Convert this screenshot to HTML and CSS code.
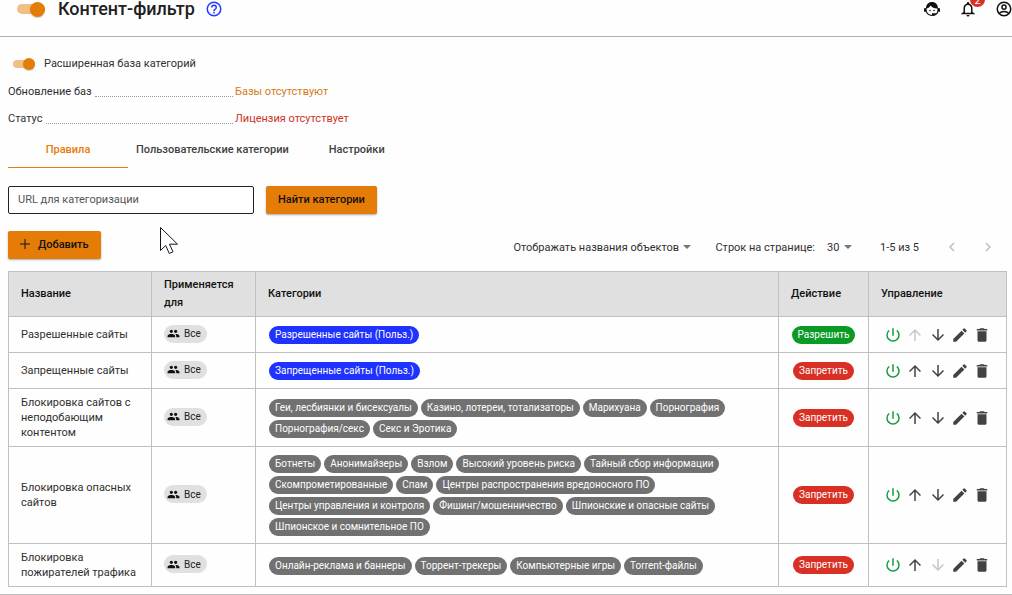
FILE: index.html
```html
<!DOCTYPE html>
<html lang="ru">
<head>
<meta charset="utf-8">
<title>Контент-фильтр</title>
<link rel="stylesheet" href="styles.css">
</head>
<body>
<svg class="sprite" aria-hidden="true">
  <symbol id="power" viewBox="0 0 24 24"><path d="M13 3h-2v10h2V3zm4.83 2.17l-1.42 1.42A6.92 6.92 0 0 1 19 12a7 7 0 1 1-11.42-5.42L6.17 5.17A8.93 8.93 0 0 0 3 12a9 9 0 0 0 18 0c0-2.74-1.23-5.18-3.17-6.83z"/></symbol>
  <symbol id="up" viewBox="0 0 24 24"><path d="M4 12l1.41 1.41L11 7.83V20h2V7.83l5.58 5.59L20 12l-8-8-8 8z"/></symbol>
  <symbol id="down" viewBox="0 0 24 24"><path d="M20 12l-1.41-1.41L13 16.17V4h-2v12.17l-5.58-5.59L4 12l8 8 8-8z"/></symbol>
  <symbol id="edit" viewBox="0 0 24 24"><path d="M3 17.25V21h3.75L17.81 9.94l-3.75-3.75L3 17.25zM20.71 7.04a1 1 0 0 0 0-1.41l-2.34-2.34a1 1 0 0 0-1.41 0l-1.83 1.83 3.75 3.75 1.83-1.83z"/></symbol>
  <symbol id="trash" viewBox="0 0 24 24"><path d="M6 19c0 1.100.9 2 2 2h8c1.100 0 2-.9 2-2V7H6v12zM19 4h-3.500l-1-1h-5l-1 1H5v2h14V4z"/></symbol>
  <symbol id="group" viewBox="0 0 24 24"><path d="M16 11c1.660 0 2.990-1.340 2.990-3S17.660 5 16 5s-3 1.340-3 3 1.340 3 3 3zm-8 0c1.660 0 2.990-1.340 2.990-3S9.660 5 8 5 5 6.340 5 8s1.340 3 3 3zm0 2c-2.330 0-7 1.170-7 3.500V19h14v-2.500c0-2.330-4.670-3.500-7-3.500zm8 0c-.29 0-.62.02-.97.05 1.160.84 1.970 1.970 1.970 3.450V19h6v-2.500c0-2.330-4.670-3.500-7-3.500z"/></symbol>
  <symbol id="caret" viewBox="0 0 8 4"><path d="M0 0h8L4 4z"/></symbol>
</svg>

<header class="header">
  <input class="switch switch-large" type="checkbox" role="switch" aria-label="Контент-фильтр" checked>
  <h1 class="title">Контент-фильтр</h1>
  <button class="icon-button help" type="button" aria-label="Справка">
    <svg class="icon" viewBox="0 0 24 24"><path d="M11 18h2v-2h-2v2zm1-16a10 10 0 1 0 0 20 10 10 0 0 0 0-20zm0 18a8 8 0 1 1 0-16 8 8 0 0 1 0 16zm0-14a4 4 0 0 0-4 4h2a2 2 0 1 1 4 0c0 2-3 1.750-3 5h2c0-2.250 3-2.500 3-5a4 4 0 0 0-4-4z"/></svg>
  </button>
  <nav class="header-actions">
    <button class="icon-button" type="button" aria-label="Поддержка">
      <svg class="icon" viewBox="0 0 18 18"><path d="M3 8.500C3 4.500 5.500 2 9 2s6 2.500 6 6.500c-3.500.2-6-.8-7.500-3C6.600 7.300 5 8.400 3 8.500z"/><path d="M3 8v2a6 5.500 0 0 0 6 5.500c3.300 0 6-2 6-5.500V8" fill="none" stroke="currentColor" stroke-width="1.200"/><rect x="1" y="8" width="2" height="4" rx="1"/><rect x="15" y="8" width="2" height="4" rx="1"/><circle cx="7" cy="10.500" r=".8"/><circle cx="11" cy="10.500" r=".8"/><path d="M9 13.200h5l-1.500 1.900H9z"/></svg>
    </button>
    <button class="icon-button bell" type="button" aria-label="Уведомления">
      <svg class="icon" viewBox="0 0 24 24"><path d="M12 22a2 2 0 0 0 2-2h-4a2 2 0 0 0 2 2zm6-6v-5c0-3.070-1.630-5.640-4.500-6.320V4a1.500 1.500 0 0 0-3 0v.68C7.640 5.360 6 7.920 6 11v5l-3 2v1h18v-1l-3-2zm-2 1H8v-6c0-2.480 1.510-4.500 4-4.500s4 2.020 4 4.500v6z"/></svg>
      <span class="badge">2</span>
    </button>
    <button class="icon-button" type="button" aria-label="Профиль">
      <svg class="icon" viewBox="0 0 24 24"><g fill="none" stroke="currentColor" stroke-width="2"><circle cx="12" cy="12" r="9"/><circle cx="12" cy="9.500" r="2.700"/><path d="M5.500 18c1.700-1.900 4-2.800 6.500-2.800s4.800.9 6.500 2.800"/></g></svg>
    </button>
  </nav>
</header>

<main class="main">
  <label class="base-switch"><input class="switch" type="checkbox" role="switch" checked>Расширенная база категорий</label>
  <dl class="facts">
    <div class="fact"><dt class="fact-name">Обновление баз</dt><dd class="fact-value warning">Базы отсутствуют</dd></div>
    <div class="fact"><dt class="fact-name">Статус</dt><dd class="fact-value error">Лицензия отсутствует</dd></div>
  </dl>

  <nav class="tabs">
    <a class="tab tab-active" href="#rules">Правила</a>
    <a class="tab" href="#categories">Пользовательские категории</a>
    <a class="tab" href="#settings">Настройки</a>
  </nav>

  <form class="search">
    <input class="url" type="text" placeholder="URL для категоризации" aria-label="URL для категоризации">
    <button class="button" type="button">Найти категории</button>
  </form>

  <div class="toolbar">
    <button class="button button-add" type="button"><svg class="plus" viewBox="0 0 10 10"><path d="M5 0v10M0 5h10"/></svg>Добавить</button>
    <div class="pager">
      <span class="picker"><select class="select" aria-label="Отображение"><option>Отображать названия объектов</option></select><svg class="caret"><use href="#caret"/></svg></span>
      <label class="per-page">Строк на странице:
        <span class="picker"><select class="select"><option>30</option></select><svg class="caret"><use href="#caret"/></svg></span>
      </label>
      <span class="range">1-5 из 5</span>
      <span class="pages">
        <button class="icon-button page" type="button" aria-label="Назад" disabled><svg class="chevron" viewBox="0 0 6 10"><path d="M5 1L1 5l4 4"/></svg></button>
        <button class="icon-button page" type="button" aria-label="Вперёд" disabled><svg class="chevron" viewBox="0 0 6 10"><path d="M1 1l4 4-4 4"/></svg></button>
      </span>
    </div>
  </div>

  <table class="rules">
    <colgroup><col class="col-name"><col class="col-target"><col><col class="col-action"><col class="col-manage"></colgroup>
    <thead>
      <tr><th>Название</th><th>Применяется для</th><th>Категории</th><th>Действие</th><th>Управление</th></tr>
    </thead>
    <tbody>
      <tr>
        <td>Разрешенные сайты</td>
        <td><span class="target"><svg class="people"><use href="#group"/></svg>Все</span></td>
        <td><div class="chips"><span class="chip custom">Разрешенные сайты (Польз.)</span></div></td>
        <td class="action"><span class="chip allow">Разрешить</span></td>
        <td><div class="manage"><button class="icon-button power" type="button" aria-label="Выключить"><svg class="icon"><use href="#power"/></svg></button><button class="icon-button" type="button" aria-label="Выше" disabled><svg class="icon"><use href="#up"/></svg></button><button class="icon-button" type="button" aria-label="Ниже"><svg class="icon"><use href="#down"/></svg></button><button class="icon-button" type="button" aria-label="Изменить"><svg class="icon"><use href="#edit"/></svg></button><button class="icon-button" type="button" aria-label="Удалить"><svg class="icon"><use href="#trash"/></svg></button></div></td>
      </tr>
      <tr>
        <td>Запрещенные сайты</td>
        <td><span class="target"><svg class="people"><use href="#group"/></svg>Все</span></td>
        <td><div class="chips"><span class="chip custom">Запрещенные сайты (Польз.)</span></div></td>
        <td class="action"><span class="chip deny">Запретить</span></td>
        <td><div class="manage"><button class="icon-button power" type="button" aria-label="Выключить"><svg class="icon"><use href="#power"/></svg></button><button class="icon-button" type="button" aria-label="Выше"><svg class="icon"><use href="#up"/></svg></button><button class="icon-button" type="button" aria-label="Ниже"><svg class="icon"><use href="#down"/></svg></button><button class="icon-button" type="button" aria-label="Изменить"><svg class="icon"><use href="#edit"/></svg></button><button class="icon-button" type="button" aria-label="Удалить"><svg class="icon"><use href="#trash"/></svg></button></div></td>
      </tr>
      <tr>
        <td>Блокировка сайтов с неподобающим контентом</td>
        <td><span class="target"><svg class="people"><use href="#group"/></svg>Все</span></td>
        <td><div class="chips"><span class="chip">Геи, лесбиянки и бисексуалы</span><span class="chip">Казино, лотереи, тотализаторы</span><span class="chip">Марихуана</span><span class="chip">Порнография</span><span class="chip">Порнография/секс</span><span class="chip">Секс и Эротика</span></div></td>
        <td class="action"><span class="chip deny">Запретить</span></td>
        <td><div class="manage"><button class="icon-button power" type="button" aria-label="Выключить"><svg class="icon"><use href="#power"/></svg></button><button class="icon-button" type="button" aria-label="Выше"><svg class="icon"><use href="#up"/></svg></button><button class="icon-button" type="button" aria-label="Ниже"><svg class="icon"><use href="#down"/></svg></button><button class="icon-button" type="button" aria-label="Изменить"><svg class="icon"><use href="#edit"/></svg></button><button class="icon-button" type="button" aria-label="Удалить"><svg class="icon"><use href="#trash"/></svg></button></div></td>
      </tr>
      <tr>
        <td>Блокировка опасных сайтов</td>
        <td><span class="target"><svg class="people"><use href="#group"/></svg>Все</span></td>
        <td><div class="chips"><span class="chip">Ботнеты</span><span class="chip">Анонимайзеры</span><span class="chip">Взлом</span><span class="chip">Высокий уровень риска</span><span class="chip">Тайный сбор информации</span><span class="chip">Скомпрометированные</span><span class="chip">Спам</span><span class="chip">Центры распространения вредоносного ПО</span><span class="chip">Центры управления и контроля</span><span class="chip">Фишинг/мошенничество</span><span class="chip">Шпионские и опасные сайты</span><span class="chip">Шпионское и сомнительное ПО</span></div></td>
        <td class="action"><span class="chip deny">Запретить</span></td>
        <td><div class="manage"><button class="icon-button power" type="button" aria-label="Выключить"><svg class="icon"><use href="#power"/></svg></button><button class="icon-button" type="button" aria-label="Выше"><svg class="icon"><use href="#up"/></svg></button><button class="icon-button" type="button" aria-label="Ниже"><svg class="icon"><use href="#down"/></svg></button><button class="icon-button" type="button" aria-label="Изменить"><svg class="icon"><use href="#edit"/></svg></button><button class="icon-button" type="button" aria-label="Удалить"><svg class="icon"><use href="#trash"/></svg></button></div></td>
      </tr>
      <tr>
        <td>Блокировка пожирателей трафика</td>
        <td><span class="target"><svg class="people"><use href="#group"/></svg>Все</span></td>
        <td><div class="chips"><span class="chip">Онлайн-реклама и баннеры</span><span class="chip">Торрент-трекеры</span><span class="chip">Компьютерные игры</span><span class="chip">Torrent-файлы</span></div></td>
        <td class="action"><span class="chip deny">Запретить</span></td>
        <td><div class="manage"><button class="icon-button power" type="button" aria-label="Выключить"><svg class="icon"><use href="#power"/></svg></button><button class="icon-button" type="button" aria-label="Выше"><svg class="icon"><use href="#up"/></svg></button><button class="icon-button" type="button" aria-label="Ниже" disabled><svg class="icon"><use href="#down"/></svg></button><button class="icon-button" type="button" aria-label="Изменить"><svg class="icon"><use href="#edit"/></svg></button><button class="icon-button" type="button" aria-label="Удалить"><svg class="icon"><use href="#trash"/></svg></button></div></td>
      </tr>
    </tbody>
  </table>
</main>
<hr class="page-end">
<svg class="cursor" viewBox="0 0 19 28" aria-hidden="true"><path d="M.5.500v23l5.200-5 3.600 8 3.700-1.700-3.500-7.600h8z"/></svg>
</body>
</html>
```
FILE: styles.css
```css
* {
  box-sizing: border-box;
}

body {
  margin: 0;
  background: #fefefe;
  color: #303030;
  font: 11px/15px Roboto, "Noto Sans", sans-serif;
}

button,
input,
select {
  font: inherit;
  color: inherit;
}

.sprite {
  display: none;
}

.icon {
  display: block;
  width: 18px;
  height: 18px;
  fill: currentColor;
}

.icon-button {
  display: block;
  padding: 0;
  border: 0;
  background: none;
  color: #424242;
}

.icon-button:disabled {
  color: #c6c6c6;
}

/* Header */
.header {
  display: flex;
  align-items: center;
  padding: 0 0 18px 17px;
  border-bottom: 1px solid #b0b0b0;
}

.title {
  margin: 0 10px 0 13px;
  color: #212121;
  font-size: 18px;
  line-height: 18px;
  font-weight: 500;
}

.help {
  color: #1f3cff;
}

.header-actions {
  display: flex;
  gap: 18px;
  margin-left: auto;
  margin-right: -1px;
}

.header-actions .icon-button {
  color: #111;
}

.bell {
  position: relative;
}

.badge {
  position: absolute;
  top: -8px;
  left: 11px;
  width: 15px;
  height: 15px;
  border-radius: 8px;
  background: #d93025;
  color: #fff;
  font-size: 11px;
  line-height: 17px;
  text-align: center;
}

.switch {
  appearance: none;
  display: flex;
  align-items: center;
  justify-content: flex-end;
  width: 22px;
  height: 8px;
  margin: 0;
  border-radius: 4px;
  background: #efbf84;
}

.switch::before {
  content: "";
  flex: none;
  width: 12px;
  height: 12px;
  border-radius: 50%;
  background: #e67c08;
  box-shadow: 0 1px 1px #0003;
}

.switch-large {
  width: 28px;
  height: 10px;
  border-radius: 5px;
}

.switch-large::before {
  width: 15px;
  height: 15px;
}

/* Database state */
.main {
  padding: 12px 5px 0 8px;
}

.base-switch {
  display: flex;
  align-items: center;
  gap: 9px;
  height: 29px;
  padding-left: 5px;
}

.facts {
  margin: 0;
}

.fact {
  display: flex;
  align-items: center;
  height: 27px;
}

.fact-name {
  display: flex;
  align-items: flex-end;
  gap: 3px;
  width: 225px;
}

.fact-name::after {
  content: "";
  flex: 1;
  margin-bottom: 2px;
  border-bottom: 1px dotted #999;
}

.fact-value {
  margin: 0 0 0 2px;
}

.warning {
  color: #d57a1c;
}

.error {
  color: #cc3326;
}

/* Tabs */
.tabs {
  display: flex;
}

.tab {
  min-width: 120px;
  padding: 0 8px;
  border-bottom: 1px solid transparent;
  color: #424242;
  font-weight: 500;
  line-height: 35px;
  text-align: center;
  text-decoration: none;
}

.tab-active {
  border-color: #e67c08;
  color: #e67c08;
}

/* Search and toolbar */
.search {
  display: flex;
  gap: 12px;
  margin-top: 18px;
}

.url {
  width: 246px;
  height: 28px;
  padding: 0 9px 2px;
  border: 1px solid #222;
  border-radius: 2px;
  background: #fff;
}

.url::placeholder {
  color: #555;
  opacity: 1;
}

.button {
  height: 28px;
  padding: 0 12px 2px;
  border: 0;
  border-radius: 2px;
  background: #e67c08;
  box-shadow: 0 1px 2px #0005;
  color: #111;
  font-weight: 500;
}

.button-add {
  display: flex;
  align-items: center;
  gap: 8px;
}

.plus {
  width: 10px;
  height: 10px;
  fill: none;
  stroke: #111;
}

.toolbar {
  display: flex;
  align-items: center;
  justify-content: space-between;
  margin: 17px 0 12px;
}

.pager {
  display: flex;
  align-items: center;
  gap: 24px;
  padding: 4px 16px 0 0;
}

.per-page {
  display: flex;
  align-items: center;
  gap: 12px;
}

.picker {
  display: flex;
  align-items: center;
  gap: 4px;
}

.select {
  appearance: none;
  padding: 0;
  border: 0;
  background: none;
}

.caret {
  width: 8px;
  height: 4px;
  fill: #757575;
}

.range {
  margin-left: 4px;
}

.pages {
  display: flex;
  gap: 30px;
  margin-left: 6px;
}

.chevron {
  display: block;
  width: 6px;
  height: 10px;
  fill: none;
  stroke: #bdbdbd;
  stroke-width: 1.5;
}

/* Rules table */
.rules {
  width: 100%;
  border-collapse: collapse;
  table-layout: fixed;
}

.col-name {
  width: 143px;
}

.col-target {
  width: 104px;
}

.col-action {
  width: 90px;
}

.col-manage {
  width: 138px;
}

.rules th,
.rules td {
  height: 36px;
  border: 1px solid #c0c0c0;
  padding: 6px 12px;
  text-align: left;
}

.rules th {
  padding: 4px 12px;
  background: #e0e0e0;
  color: #111;
  font-weight: 500;
  line-height: 18px;
}

.target {
  display: flex;
  align-items: center;
  gap: 4px;
  width: fit-content;
  height: 18px;
  margin-bottom: 2px;
  padding: 0 6px 0 3px;
  border-radius: 9px;
  background: #e0e0e0;
  color: #222;
  font-size: 10px;
}

.people {
  width: 13px;
  height: 13px;
  fill: #111;
}

.chips {
  display: flex;
  flex-wrap: wrap;
  gap: 3px;
  padding: 2px 0 1px 1px;
}

.chip {
  display: inline-block;
  padding: 0 6px;
  border-radius: 9px;
  background: #717171;
  color: #fff;
  font-size: 10px;
  line-height: 18px;
}

.custom {
  background: #1f32ff;
}

.allow {
  background: #0b9a26;
}

.deny {
  background: #d93025;
}

.rules .action {
  padding: 6px 0;
  text-align: center;
}

.manage {
  display: flex;
  justify-content: space-between;
  margin: 0 3px;
}

.power {
  color: #149a3c;
}

.page-end {
  margin: 7px 0 0;
  border: 0;
  border-top: 1px solid #c0c0c0;
}

.cursor {
  position: absolute;
  top: 227px;
  left: 160px;
  width: 19px;
  height: 28px;
  fill: #fff;
  stroke: #15151f;
}
```
